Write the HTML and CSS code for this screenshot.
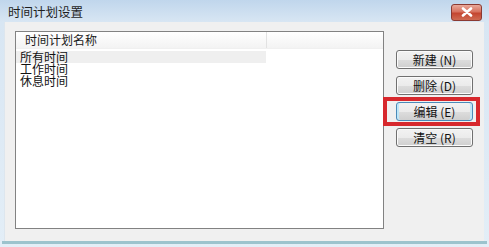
FILE: index.html
```html
<!DOCTYPE html>
<html lang="zh">
<head>
<meta charset="utf-8">
<link rel="stylesheet" href="styles.css">
</head>
<body>
<div class="window">
  <div class="titlebar">
    <span class="title">时间计划设置</span>
    <button class="close" aria-label="关闭">
      <svg width="12" height="10" viewBox="0 0 12 10"><path d="M2 1.5 L10 8.5 M10 1.5 L2 8.5" stroke="#fff" stroke-width="2.6" stroke-linecap="round"/></svg>
    </button>
  </div>
  <div class="client">
    <div class="list">
      <div class="list-head">
        <div class="col-name">时间计划名称</div>
        <div class="col-rest"></div>
      </div>
      <div class="row selected">所有时间</div>
      <div class="row">工作时间</div>
      <div class="row">休息时间</div>
    </div>
    <div class="buttons">
      <button class="btn">新建 (N)</button>
      <button class="btn">删除 (D)</button>
      <button class="btn active">编辑 (E)<span class="mark"></span></button>
      <button class="btn">清空 (R)</button>
    </div>
  </div>
  <div class="frame-bottom"></div>
</div>
</body>
</html>
```
FILE: styles.css
```css
html, body {
  margin: 0;
  padding: 0;
  background: #f4fbfd;
}
.window {
  width: 489px;
  height: 247px;
  display: flex;
  flex-direction: column;
  background: linear-gradient(#c0d6ec, #d8e6f3 22px, #e3eef7);
  font-family: "Noto Sans CJK SC", "Noto Sans", sans-serif;
  color: #000;
}
.titlebar {
  height: 22px;
  flex: none;
  display: flex;
  align-items: center;
  justify-content: space-between;
  padding: 0 7px 0 8px;
}
.title {
  font-size: 12.5px;
  line-height: 22px;
  color: #1e1e1e;
  margin-top: 2px;
}
.close {
  width: 31px;
  height: 17px;
  margin-top: 2px;
  padding: 0;
  border: 1px solid #8b3a32;
  border-radius: 3px;
  background: linear-gradient(#e9a99a, #d7725f 45%, #c44630 55%, #cf6b52);
  display: flex;
  align-items: center;
  justify-content: center;
}
.client {
  flex: none;
  height: 219px;
  margin: 0 5px 0 4px;
  background: #f0f0f0;
  display: flex;
  padding: 9px 0 0 10px;
  box-sizing: border-box;
  border-left: 1px solid #dde6ee;
}
.list {
  width: 369px;
  height: 198px;
  box-sizing: border-box;
  border: 1px solid #828282;
  background: #fff;
  font-size: 12px;
}
.list-head {
  display: flex;
  height: 16px;
  background: linear-gradient(#fff, #f3f3f3);
  border-bottom: 1px solid #f0f0f0;
}
.col-name {
  width: 241px;
  padding-left: 9px;
  line-height: 16px;
  border-right: 1px solid #e2e2e2;
  color: #1a1a1a;
}
.col-rest {
  flex: 1;
}
.row {
  width: 246px;
  height: 12px;
  line-height: 12px;
  padding-left: 4px;
  color: #111;
}
.row.selected {
  margin-top: 2px;
  background: #efefef;
}
.buttons {
  display: flex;
  flex-direction: column;
  gap: 7px;
  margin-left: 12px;
  padding-top: 19px;
}
.btn {
  position: relative;
  width: 77px;
  height: 19px;
  padding: 0;
  border: 1px solid #707070;
  border-radius: 3px;
  background: linear-gradient(#f2f2f2, #ebebeb 50%, #dddddd 51%, #cfcfcf);
  font-family: "Noto Sans CJK SC", "Noto Sans", sans-serif;
  font-size: 12px;
  line-height: 17px;
  color: #111;
  box-shadow: inset 0 0 0 1px #fbfbfb;
}
.btn.active {
  border-color: #4a8ab8;
  box-shadow: inset 2px 0 0 #bfe6f7, inset -2px 0 0 #bfe6f7;
}
.mark {
  position: absolute;
  left: -14px;
  right: -8px;
  top: -6px;
  bottom: -6px;
  border: 4px solid #d7282d;
  pointer-events: none;
}
.frame-bottom {
  flex: none;
  height: 3px;
  margin: 0 2px;
  background: #9cc3cd;
}
```
